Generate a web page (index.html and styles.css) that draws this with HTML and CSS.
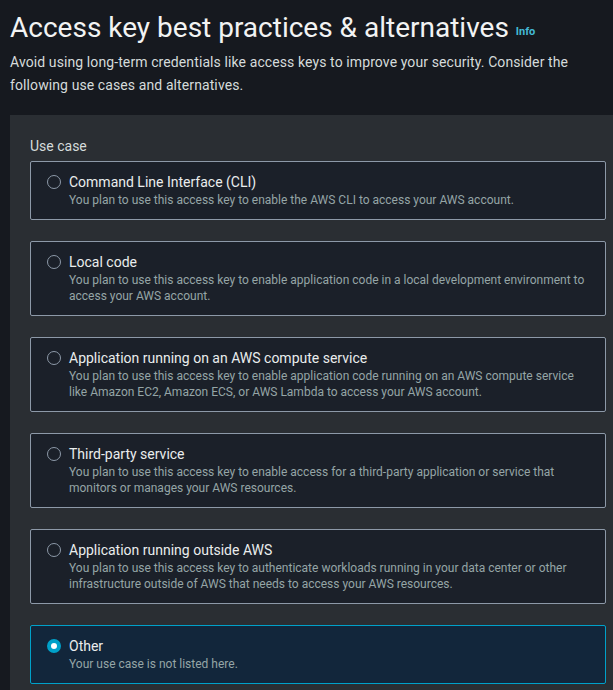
FILE: index.html
```html
<!DOCTYPE html>
<html>
<head>
<meta charset="utf-8">
<link rel="stylesheet" href="styles.css">
</head>
<body>
<div class="page">
  <header class="header">
    <h1 class="title">Access key best practices &amp; alternatives <a class="info">Info</a></h1>
    <p class="lead">Avoid using long-term credentials like access keys to improve your security. Consider the following use cases and alternatives.</p>
  </header>
  <section class="panel">
    <div class="label">Use case</div>
    <div class="tiles">
      <div class="tile">
        <span class="radio"></span>
        <div class="tile-text">
          <div class="tile-title">Command Line Interface (CLI)</div>
          <div class="tile-desc">You plan to use this access key to enable the AWS CLI to access your AWS account.</div>
        </div>
      </div>
      <div class="tile">
        <span class="radio"></span>
        <div class="tile-text">
          <div class="tile-title">Local code</div>
          <div class="tile-desc">You plan to use this access key to enable application code in a local development environment to access your AWS account.</div>
        </div>
      </div>
      <div class="tile">
        <span class="radio"></span>
        <div class="tile-text">
          <div class="tile-title">Application running on an AWS compute service</div>
          <div class="tile-desc">You plan to use this access key to enable application code running on an AWS compute service like Amazon EC2, Amazon ECS, or AWS Lambda to access your AWS account.</div>
        </div>
      </div>
      <div class="tile">
        <span class="radio"></span>
        <div class="tile-text">
          <div class="tile-title">Third-party service</div>
          <div class="tile-desc">You plan to use this access key to enable access for a third-party application or service that monitors or manages your AWS resources.</div>
        </div>
      </div>
      <div class="tile">
        <span class="radio"></span>
        <div class="tile-text">
          <div class="tile-title">Application running outside AWS</div>
          <div class="tile-desc">You plan to use this access key to authenticate workloads running in your data center or other infrastructure outside of AWS that needs to access your AWS resources.</div>
        </div>
      </div>
      <div class="tile selected">
        <span class="radio checked"></span>
        <div class="tile-text">
          <div class="tile-title">Other</div>
          <div class="tile-desc">Your use case is not listed here.</div>
        </div>
      </div>
    </div>
  </section>
</div>
</body>
</html>
```
FILE: styles.css
```css
html, body {
  margin: 0;
  padding: 0;
  background: #16191f;
  overflow: hidden;
}
body {
  font-family: Roboto, "Open Sans", sans-serif;
  color: #d5dbdb;
}
.page {
  padding: 0 0 0 10px;
}
.header {
  padding-top: 9px;
}
.title {
  margin: 0;
  font-size: 28px;
  font-weight: 400;
  line-height: 38px;
  color: #f2f3f3;
}
.info {
  font-size: 11px;
  font-weight: 700;
  color: #44b9d6;
  vertical-align: 2px;
}
.lead {
  margin: 0;
  font-size: 14px;
  line-height: 23px;
  letter-spacing: 0.1px;
  color: #d5dbdb;
  width: 590px;
}
.panel {
  margin-top: 18px;
  width: 620px;
  background: #2a2e33;
  padding: 20px 20px 20px 20px;
  box-sizing: border-box;
}
.label {
  font-size: 14px;
  line-height: 22px;
  color: #d5dbdb;
  margin-bottom: 4px;
}
.tiles {
  display: flex;
  flex-direction: column;
  gap: 21px;
  width: 576px;
}
.tile {
  display: flex;
  align-items: flex-start;
  gap: 8px;
  background: #1b2029;
  border: 1px solid #8d99a8;
  border-radius: 2px;
  padding: 10px 18px 11px 16px;
}
.tile.selected {
  background: #12263b;
  border-color: #00a1c9;
}
.radio {
  flex: none;
  width: 14px;
  height: 14px;
  margin-top: 3px;
  box-sizing: border-box;
  border: 1.5px solid #8d99a8;
  border-radius: 50%;
}
.radio.checked {
  border: 4.5px solid #00a1c9;
  background: #ffffff;
}
.tile-title {
  font-size: 14px;
  line-height: 20px;
  color: #eaeded;
}
.tile-desc {
  font-size: 12px;
  line-height: 16px;
  color: #95a5a6;
}
```
